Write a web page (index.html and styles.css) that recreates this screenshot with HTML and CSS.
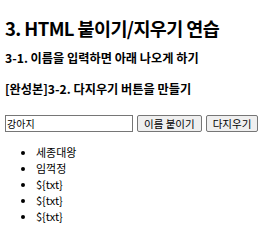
FILE: index.html
```html
<!DOCTYPE html>
<html>
  <head>
    <meta charset="UTF-8" />
    <title>붙이기/지우기 연습</title>
    <link rel="stylesheet" href="styles.css">
  </head>
  <body>
    <h1>3. HTML 붙이기/지우기 연습</h1>
    <h4>3-1. 이름을 입력하면 아래 나오게 하기</h4>
    <h4>[완성본]3-2. 다지우기 버튼을 만들기</h4>

    <div class="input-row">
      <input type="text" id="nameInput" value="강아지" />
      <button id="addName">이름 붙이기</button>
      <button id="clearNames">다지우기</button>
    </div>

    <ul id="nameList">
      <li>세종대왕</li>
      <li>임꺽정</li>
      <li>${txt}</li>
      <li>${txt}</li>
      <li>${txt}</li>
    </ul>
  </body>
</html>
```

FILE: styles.css
```css
body {
  margin: 5px;
  font-family: "Noto Sans CJK KR", sans-serif;
  font-size: 11px;
  color: #000;
  background: #fff;
}

h1 {
  font-size: 18.5px;
  letter-spacing: -0.6px;
  line-height: 26px;
  margin: 10px 0 10px;
}

h4 {
  font-size: 12.2px;
  line-height: 14px;
  margin: 10px 0 17px;
}

.input-row {
  display: flex;
  align-items: center;
  gap: 4px;
  margin-top: 19px;
}

input {
  box-sizing: border-box;
  width: 128px;
  height: 17px;
  margin: 0;
  padding: 0 1px;
  border: 1px solid #767676;
  font-family: inherit;
  font-size: 10px;
}

button {
  box-sizing: border-box;
  height: 17px;
  margin: 0;
  padding: 0 6px;
  border: 1px solid #767676;
  border-radius: 2px;
  background: #efefef;
  font-family: inherit;
  font-size: 10.5px;
  color: #000;
}

ul {
  margin: 12px 0;
  padding-left: 31px;
}

li {
  line-height: 16px;
}
```
